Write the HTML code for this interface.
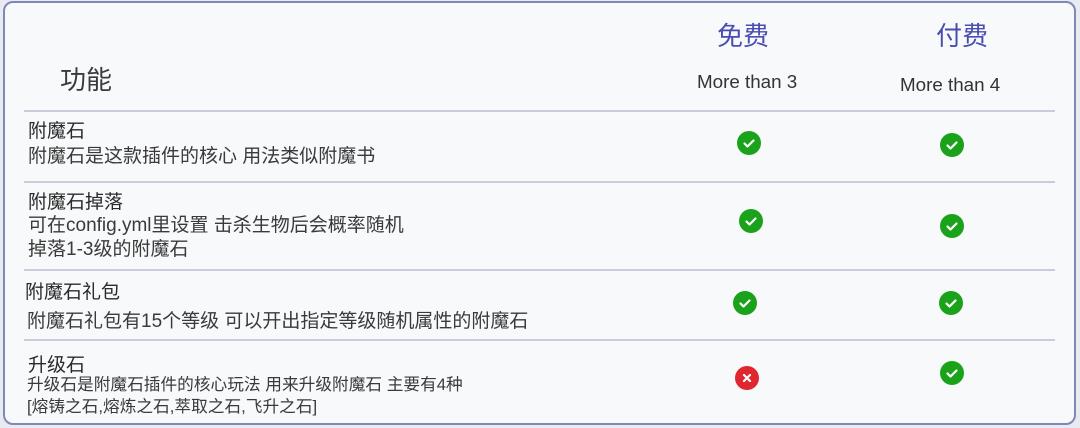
<!DOCTYPE html>
<html><head><meta charset="utf-8"><style>
body{margin:0;width:1080px;height:428px;background:#e9ebf2;position:relative;overflow:hidden;font-family:"Liberation Sans","Noto Sans CJK SC",sans-serif;}
.card{position:absolute;left:3px;top:1px;width:1069px;height:420px;background:#f8f9fb;border:2px solid #8088b8;border-radius:10px;}
.t{position:absolute;white-space:nowrap;line-height:1;}
.h{color:#2a2a2a;font-size:19px;}
.d{color:#3a3a3a;font-size:19px;}
.ln{position:absolute;left:24px;width:1031px;height:2px;background:#c8ccdb;}
.ic{position:absolute;width:24px;height:24px;border-radius:50%;background:#1aa31a;}
.ic svg{position:absolute;left:0;top:0}
.r{background:#e0262e;}
</style></head><body>
<div class="card"></div>
<div class="t" style="left:60px;top:67px;font-size:26px;color:#3a3a3a">功能</div>
<div class="t" style="left:717px;top:23px;font-size:26px;color:#4a4db0">免费</div>
<div class="t" style="left:936px;top:23px;font-size:26px;color:#4a4db0">付费</div>
<div class="t" style="left:697px;top:73px;font-size:18.8px;color:#333">More than 3</div>
<div class="t" style="left:900px;top:76px;font-size:18.8px;color:#333">More than 4</div>
<div class="ln" style="top:110px"></div>
<div class="ln" style="top:181px"></div>
<div class="ln" style="top:269px"></div>
<div class="ln" style="top:339px"></div>
<div class="t h" style="left:28px;top:122px">附魔石</div>
<div class="t d" style="left:28px;top:147px">附魔石是这款插件的核心 用法类似附魔书</div>
<div class="t h" style="left:28px;top:193px">附魔石掉落</div>
<div class="t d" style="left:28px;top:216px">可在config.yml里设置 击杀生物后会概率随机</div>
<div class="t d" style="left:28px;top:240px">掉落1-3级的附魔石</div>
<div class="t h" style="left:25px;top:283px">附魔石礼包</div>
<div class="t d" style="left:27px;top:312px">附魔石礼包有15个等级 可以开出指定等级随机属性的附魔石</div>
<div class="t h" style="left:28px;top:356px">升级石</div>
<div class="t" style="left:27px;top:377px;font-size:16.7px;color:#3a3a3a">升级石是附魔石插件的核心玩法 用来升级附魔石 主要有4种</div>
<div class="t" style="left:27px;top:399px;font-size:16.7px;color:#3a3a3a">[熔铸之石,熔炼之石,萃取之石,飞升之石]</div>
<div class="ic" style="left:737px;top:131px"><svg width="24" height="24"><path d="M7.5 12.5l3 3 6-6" stroke="#fff" stroke-width="2.2" fill="none" stroke-linecap="round" stroke-linejoin="round"/></svg></div>
<div class="ic" style="left:940px;top:133px"><svg width="24" height="24"><path d="M7.5 12.5l3 3 6-6" stroke="#fff" stroke-width="2.2" fill="none" stroke-linecap="round" stroke-linejoin="round"/></svg></div>
<div class="ic" style="left:739px;top:209px"><svg width="24" height="24"><path d="M7.5 12.5l3 3 6-6" stroke="#fff" stroke-width="2.2" fill="none" stroke-linecap="round" stroke-linejoin="round"/></svg></div>
<div class="ic" style="left:940px;top:214px"><svg width="24" height="24"><path d="M7.5 12.5l3 3 6-6" stroke="#fff" stroke-width="2.2" fill="none" stroke-linecap="round" stroke-linejoin="round"/></svg></div>
<div class="ic" style="left:733px;top:291px"><svg width="24" height="24"><path d="M7.5 12.5l3 3 6-6" stroke="#fff" stroke-width="2.2" fill="none" stroke-linecap="round" stroke-linejoin="round"/></svg></div>
<div class="ic" style="left:939px;top:291px"><svg width="24" height="24"><path d="M7.5 12.5l3 3 6-6" stroke="#fff" stroke-width="2.2" fill="none" stroke-linecap="round" stroke-linejoin="round"/></svg></div>
<div class="ic r" style="left:735px;top:366px"><svg width="24" height="24"><path d="M9 9l6 6M15 9l-6 6" stroke="#fff" stroke-width="2.2" fill="none" stroke-linecap="round"/></svg></div>
<div class="ic" style="left:940px;top:361px"><svg width="24" height="24"><path d="M7.5 12.5l3 3 6-6" stroke="#fff" stroke-width="2.2" fill="none" stroke-linecap="round" stroke-linejoin="round"/></svg></div>
</body></html>
